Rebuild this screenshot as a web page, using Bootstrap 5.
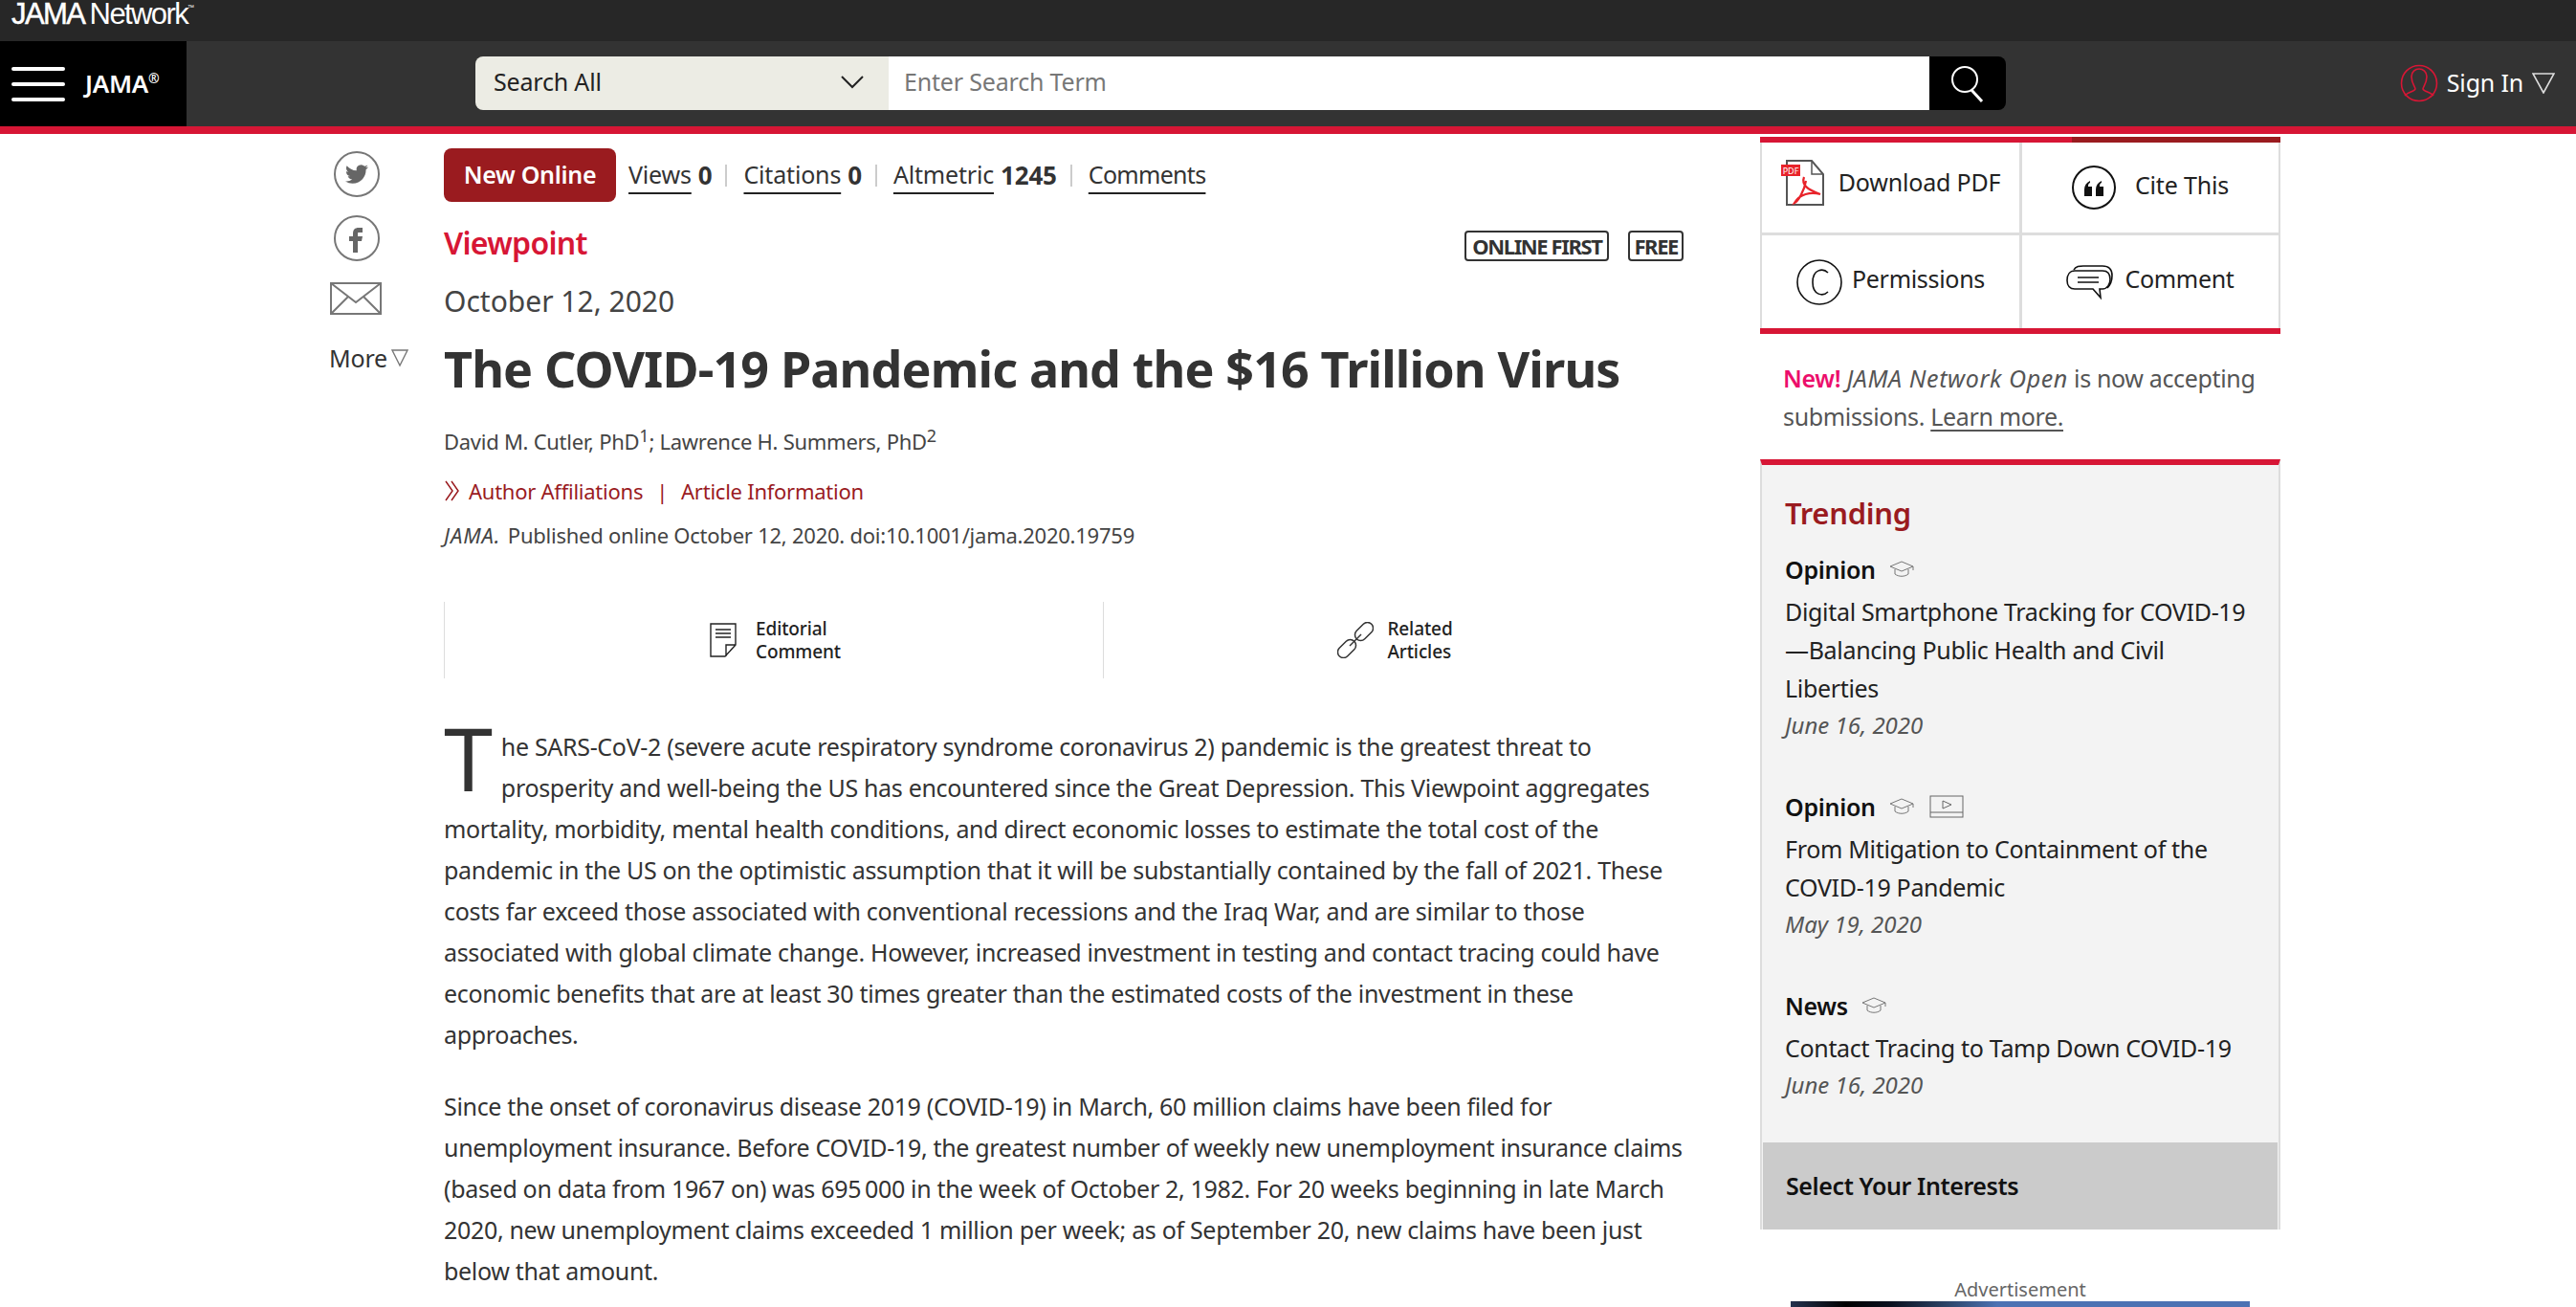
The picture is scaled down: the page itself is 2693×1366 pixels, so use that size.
<!DOCTYPE html>
<html>
<head>
    <title>The COVID-19 Pandemic and the $16 Trillion Virus</title>
    <link href="https://cdn.jsdelivr.net/npm/bootstrap@5.3.0/dist/css/bootstrap.min.css" rel="stylesheet">
    <style>
        html, body { height: 100vh; overflow: hidden; }
        body { font-family: "Noto Sans", sans-serif; color: #333; font-size: 25px; letter-spacing: -.18px; background: #fff; }
        a { color: inherit; text-decoration: none; }
        .net-bar { height: 43px; background: #272727; color: #fff; padding-left: 12px; font-size: 31px; line-height: 30px; letter-spacing: -1.6px; font-family: "Liberation Sans", sans-serif; }
        .net-bar b { font-weight: 400; -webkit-text-stroke: .5px #fff; }
        .net-bar sup { font-size: 7px; top: -15px; letter-spacing: 0; }
        .main-bar { height: 97px; background: #333; border-bottom: 8px solid #d71635; }
        .logo-box { width: 195px; height: 89px; background: #000; color: #fff; padding-left: 12px; gap: 21px; }
        .logo-txt { font-weight: 600; font-size: 26px; letter-spacing: -.3px; }
        .logo-txt sup { font-size: 14px; top: -10px; }
        .burger i { display: block; width: 56px; height: 4px; background: #fff; border-radius: 2px; margin: 12px 0; }
        .search-box { margin-left: 302px; width: 1600px; height: 56px; }
        .search-sel { width: 432px; background: #ecece4; border-radius: 8px 0 0 8px; color: #222; padding: 0 26px 2px 19px; }
        .search-in { flex: 1; background: #fff; color: #777; padding: 0 0 2px 16px; }
        .search-btn { width: 80px; background: #000; border-radius: 0 8px 8px 0; }
        .sign-in { margin-left: auto; margin-right: 22px; color: #fff; gap: 9px; font-size: 25px; height: 56px; }
        .page-wrap { padding-left: 344px; }
        .share-rail { width: 120px; padding-top: 18px; flex: none; }
        .share-rail svg { display: block; }
        .ci { margin-left: 5px; margin-bottom: 19px; }
        .env-ico { margin-top: 22px; }
        .more-lnk { color: #333; margin-top: 27px; line-height: 36px; }
        .art-col { width: 1296px; flex: none; padding-top: 15px; }
        .aside-col { width: 544px; margin-left: 80px; flex: none; padding-top: 3px; }
        .new-btn { background: #9a1b1f; color: #fff; font-weight: 600; border-radius: 8px; width: 180px; height: 56px; letter-spacing: -.3px; }
        .stat-row { height: 56px; margin-left: 13px; color: #333; }
        .stat-row u { text-decoration: underline 2px #222; text-underline-offset: 9px; }
        .stat-row u:last-child { letter-spacing: -.7px; }
        .stat-row b { font-weight: 700; font-size: 26px; margin-left: 7px; }
        .stat-sep { width: 2px; height: 23px; background: #ccc; margin: 0 17px 0 14px; }
        .kind-lnk { color: #d71635; font-size: 32px; font-weight: 600; line-height: 44px; letter-spacing: -.7px; }
        .kind-row { margin-top: 21px; }
        .tag-lbl { border: 2px solid #333; border-radius: 4px; height: 32px; font-size: 22px; font-weight: 700; color: #333; padding: 0 6px; line-height: 28px; letter-spacing: -1.4px; position: relative; top: 3px; }
        .tag-lbl + .tag-lbl { padding: 0 4px; }
        .tag-gap { gap: 20px; }
        .pub-date { font-size: 30px; color: #444; margin-top: 19px; line-height: 40px; letter-spacing: 0; }
        .art-title { font-size: 52px; font-weight: 700; color: #333; margin: 15px 0 0; line-height: 70px; letter-spacing: -.86px; }
        .au-line { font-size: 22px; color: #444; margin-top: 25px; line-height: 32px; letter-spacing: -.27px; }
        .au-line sup { font-size: 18px; top: -8px; vertical-align: baseline; position: relative; }
        .aff-line { font-size: 22px; color: #9a1b1f; margin-top: 20px; line-height: 32px; letter-spacing: -.25px; }
        .aff-sep { margin: 0 14px; }
        .cite-line { font-size: 22px; color: #444; margin-top: 14px; line-height: 32px; letter-spacing: -.24px; }
        .cite-line i { letter-spacing: .9px; margin-right: 2px; }
        .rel-box { margin-top: 54px; height: 80px; }
        .rel-cell { width: 689px; flex: none; border-left: 1px solid #ddd; gap: 20px; font-size: 19px; font-weight: 500; line-height: 24px; color: #222; letter-spacing: -.1px; padding-left: 3px; }
        .rel-cell + .rel-cell { width: 607px; gap: 14px; }
        .body-txt { margin-top: 50px; line-height: 43px; color: #333; letter-spacing: -.32px; }
        .body-txt p { margin: 0 0 32px; }
        .drop-t { float: left; font-size: 92px; line-height: 66px; height: 86px; margin: 0 9px 0 0; font-weight: 400; color: #333; }
        .tool-bar { height: 6px; background: linear-gradient(to right, #d71635 326px, #9a1b1f 326px); }
        .tool-grid { display: grid; grid-template-columns: 272px 1fr; border-left: 2px solid #ddd; border-right: 2px solid #ddd; }
        .tool-cell { height: 97px; color: #222; }
        .tool-cell span { margin-bottom: 5px; }
        .tool-cell:nth-child(odd) { border-right: 3px solid #ddd; }
        .tool-cell:nth-child(-n+2) { border-bottom: 3px solid #ddd; }
        .tool-pdf { padding-bottom: 10px; gap: 14px; }
        .tool-pdf span { margin-bottom: 0; }
        .tool-cite { gap: 20px; }
        .tool-perm { gap: 10px; letter-spacing: -.3px; }
        .tool-talk { gap: 9px; letter-spacing: -.3px; }
        .tool-end { height: 6px; background: #d71635; }
        .promo-txt { padding: 26px 24px 25px 24px; line-height: 40px; color: #555; letter-spacing: -.35px; }
        .promo-txt b { color: #ec0e6b; font-weight: 600; }
        .promo-txt i { letter-spacing: .6px; }
        .promo-txt u { text-underline-offset: 4px; }
        .trend-box { background: #f3f3f3; border-top: 6px solid #d71635; border-left: 2px solid #ddd; border-right: 2px solid #ddd; padding-top: 28px; }
        .trend-in { padding: 0 24px; }
        .trend-ttl { color: #9a1b1f; font-size: 31px; font-weight: 600; line-height: 44px; margin-bottom: 21px; letter-spacing: -.3px; }
        .trend-item { margin-bottom: 50px; }
        .trend-kind { font-weight: 600; color: #111; line-height: 32px; gap: 14px; letter-spacing: -.3px; }
        .trend-art { line-height: 40px; color: #222; margin-top: 8px; letter-spacing: -.32px; }
        .trend-date { font-style: italic; color: #555; font-size: 24px; line-height: 38px; letter-spacing: 0; }
        .interest-bar { background: #cbcbcb; height: 91px; padding-left: 24px; font-weight: 600; color: #111; margin: 41px 1px 0; letter-spacing: -.4px; }
        .ad-lbl { font-size: 20px; color: #666; text-align: center; margin-top: 51px; line-height: 24px; letter-spacing: 0; }
        .ad-pic { width: 480px; height: 30px; margin: 0 0 0 32px; background: linear-gradient(to right, #24324f, #000 12%, #0b1120 22%, #2c4468 34%, #4c72b3 45%); }
    </style>
</head>
<body>
    <div class="net-bar"><b>JAMA</b> Network<sup>™</sup></div>
    <div class="main-bar d-flex align-items-start">
        <div class="logo-box d-flex align-items-center">
            <div class="burger"><i></i><i></i><i></i></div>
            <span class="logo-txt">JAMA<sup>®</sup></span>
        </div>
        <div class="search-box d-flex mt-3">
            <div class="search-sel d-flex align-items-center justify-content-between">
                <span>Search All</span>
                <svg width="24" height="14" viewBox="0 0 24 14" fill="none" stroke="#222" stroke-width="2"><path d="M1 1l11 11L23 1"/></svg>
            </div>
            <div class="search-in d-flex align-items-center">Enter Search Term</div>
            <div class="search-btn d-flex align-items-center justify-content-center">
                <svg width="40" height="40" viewBox="0 0 40 40" fill="none" stroke="#fff" stroke-width="2"><circle cx="17" cy="16" r="13"/><path d="M24 27l11 12" stroke-width="3"/></svg>
            </div>
        </div>
        <div class="sign-in d-flex align-items-center mt-3">
            <svg width="40" height="40" viewBox="0 0 40 40" fill="none" stroke="#d71635" stroke-width="1.6"><circle cx="20" cy="20" r="18.5"/><path d="M5 33c3-4 10-4 11-7 0-2-4-6-4-13 0-5 4-8 8-8s8 3 8 8c0 7-4 11-4 13 1 3 8 3 11 7"/></svg>
            <span>Sign In</span>
            <svg width="24" height="22" viewBox="0 0 24 22" fill="none" stroke="#ddd" stroke-width="1.6"><path d="M1 1h22L12 21z"/></svg>
        </div>
    </div>

    <div class="page-wrap d-flex">
        <div class="share-rail">
            <svg class="ci" width="48" height="48" viewBox="0 0 48 48"><circle cx="24" cy="24" r="23" fill="none" stroke="#777" stroke-width="2"/><g transform="translate(12 12)"><path fill="#666" d="M23.953 4.57a10 10 0 01-2.825.775 4.958 4.958 0 002.163-2.723c-.951.555-2.005.959-3.127 1.184a4.92 4.92 0 00-8.384 4.482C7.69 8.095 4.067 6.13 1.64 3.162a4.822 4.822 0 00-.666 2.475c0 1.71.87 3.213 2.188 4.096a4.904 4.904 0 01-2.228-.616v.06a4.923 4.923 0 003.946 4.827 4.996 4.996 0 01-2.212.085 4.936 4.936 0 004.604 3.417 9.867 9.867 0 01-6.102 2.105c-.39 0-.779-.023-1.17-.067a13.995 13.995 0 007.557 2.209c9.053 0 13.998-7.496 13.998-13.985 0-.21 0-.42-.015-.63A9.935 9.935 0 0024 4.59z"/></g></svg>
            <svg class="ci" width="48" height="48" viewBox="0 0 48 48"><circle cx="24" cy="24" r="23" fill="none" stroke="#777" stroke-width="2"/><path fill="#666" d="M26 18h4v-5h-4c-4 0-6 2-6 6v3h-4v5h4v12h5V27h4l1-5h-5v-3c0-.6.4-1 1-1z"/></svg>
            <svg class="env-ico" width="56" height="34" viewBox="0 0 56 34" fill="none" stroke="#777" stroke-width="2"><rect x="2" y="1" width="52" height="32"/><path d="M2 1l26 20L54 1M2 33l18-18M54 33L36 15"/></svg>
            <div class="more-lnk d-flex align-items-center">More<svg class="ms-1" width="18" height="20" viewBox="0 0 18 20" fill="none" stroke="#777" stroke-width="1.4"><path d="M1 2h16L9 18z"/></svg></div>
        </div>

        <div class="art-col">
            <div class="d-flex">
                <a class="new-btn d-flex align-items-center justify-content-center" href="#">New Online</a>
                <div class="stat-row d-flex align-items-center">
                    <u>Views</u><b>0</b><span class="stat-sep"></span>
                    <u>Citations</u><b>0</b><span class="stat-sep"></span>
                    <u>Altmetric</u><b>1245</b><span class="stat-sep"></span>
                    <u>Comments</u>
                </div>
            </div>
            <div class="kind-row d-flex justify-content-between align-items-center">
                <a class="kind-lnk" href="#">Viewpoint</a>
                <div class="d-flex tag-gap">
                    <span class="tag-lbl">ONLINE FIRST</span>
                    <span class="tag-lbl">FREE</span>
                </div>
            </div>
            <div class="pub-date">October 12, 2020</div>
            <h1 class="art-title">The COVID-19 Pandemic and the $16 Trillion Virus</h1>
            <div class="au-line">David M. Cutler, PhD<sup>1</sup>; Lawrence H. Summers, PhD<sup>2</sup></div>
            <div class="aff-line d-flex align-items-center">
                <svg class="me-2" width="18" height="22" viewBox="0 0 18 22" fill="none" stroke="#9a1b1f" stroke-width="1.5"><path d="M2 1l7 10-7 10M8 1l7 10-7 10"/></svg>
                <a href="#">Author Affiliations</a><span class="aff-sep">|</span><a href="#">Article Information</a>
            </div>
            <div class="cite-line"><i>JAMA.</i> Published online October 12, 2020. doi:10.1001/jama.2020.19759</div>
            <div class="rel-box d-flex">
                <div class="rel-cell d-flex align-items-center justify-content-center">
                    <svg width="28" height="36" viewBox="0 0 28 36" fill="none" stroke="#222" stroke-width="1.4"><path d="M1 1h26v22L16 35H1zM27 23H17v12M6 7h16M6 11h16M6 15h16"/></svg>
                    <span>Editorial<br>Comment</span>
                </div>
                <div class="rel-cell d-flex align-items-center justify-content-center">
                    <svg width="38" height="38" viewBox="0 0 38 38" fill="none" stroke="#333" stroke-width="1.5"><rect x="-11" y="-6" width="22" height="12" rx="6" transform="translate(10 28) rotate(-45)"/><rect x="-11" y="-6" width="22" height="12" rx="6" transform="translate(28 10) rotate(-45)"/><path d="M13 25l12-12"/></svg>
                    <span>Related<br>Articles</span>
                </div>
            </div>
            <div class="body-txt">
                <p><span class="drop-t">T</span>he SARS-CoV-2 (severe acute respiratory syndrome coronavirus 2) pandemic is the greatest threat to prosperity and well-being the US has encountered since the Great Depression. This Viewpoint aggregates mortality, morbidity, mental health conditions, and direct economic losses to estimate the total cost of the pandemic in the US on the optimistic assumption that it will be substantially contained by the fall of 2021. These costs far exceed those associated with conventional recessions and the Iraq War, and are similar to those associated with global climate change. However, increased investment in testing and contact tracing could have economic benefits that are at least 30 times greater than the estimated costs of the investment in these approaches.</p>
                <p>Since the onset of coronavirus disease 2019 (COVID-19) in March, 60 million claims have been filed for unemployment insurance. Before COVID-19, the greatest number of weekly new unemployment insurance claims (based on data from 1967 on) was 695&#8239;000 in the week of October 2, 1982. For 20 weeks beginning in late March 2020, new unemployment claims exceeded 1 million per week; as of September 20, new claims have been just below that amount.</p>
            </div>
        </div>

        <div class="aside-col">
            <div class="tool-bar"></div>
            <div class="tool-grid">
                <a class="tool-cell tool-pdf d-flex align-items-center justify-content-center" href="#">
                    <svg width="46" height="48" viewBox="0 0 46 48"><path d="M6 1h26l12 14v32H6z" fill="#fff" stroke="#555" stroke-width="2"/><path d="M32 1v14h12" fill="none" stroke="#555" stroke-width="1.5"/><rect y="5" width="20" height="12" fill="#e8232a"/><text x="10" y="14.500" font-size="9" fill="#fff" text-anchor="middle" letter-spacing="0">PDF</text><path d="M24 18c-3 8 3 13 17 18-10-3-22 0-27 9 4-2 10-12 12-23" fill="none" stroke="#e8232a" stroke-width="2.2"/></svg>
                    <span>Download PDF</span>
                </a>
                <a class="tool-cell tool-cite d-flex align-items-center justify-content-center" href="#">
                    <svg width="46" height="46" viewBox="0 0 46 46"><circle cx="23" cy="23" r="22" fill="none" stroke="#111" stroke-width="2"/><path fill="#111" d="M13 32v-7c0-4 2-7 6-9v2c-2 1-2 2-2 4h4v10zM25 32v-7c0-4 2-7 6-9v2c-2 1-2 2-2 4h4v10z"/></svg>
                    <span>Cite This</span>
                </a>
                <a class="tool-cell tool-perm d-flex align-items-center justify-content-center" href="#">
                    <svg width="48" height="48" viewBox="0 0 48 48" fill="none" stroke="#111" stroke-width="1.6"><circle cx="24" cy="24" r="23"/><path d="M33 14c-5-5-16-4-16 10s11 15 16 10"/></svg>
                    <span>Permissions</span>
                </a>
                <a class="tool-cell tool-talk d-flex align-items-center justify-content-center" href="#">
                    <svg width="52" height="38" viewBox="0 0 52 38" fill="none" stroke="#111" stroke-width="1.6"><path d="M8 6c2-4 6-4 10-4h20c6 0 10 3 10 10 0 6-2 10-5 13"/><path d="M9 7h29c6 0 8 4 8 9s-3 10-8 10h-3l1 9-8-9H9c-5 0-8-3-8-9s3-10 8-10z" fill="#fff"/><path d="M12 14h22M12 19h22"/></svg>
                    <span>Comment</span>
                </a>
            </div>
            <div class="tool-end"></div>
            <div class="promo-txt"><b>New!</b> <i>JAMA Network Open</i> is now accepting submissions. <u>Learn more.</u></div>
            <div class="trend-box">
                <div class="trend-in">
                    <div class="trend-ttl">Trending</div>
                    <div class="trend-item">
                        <div class="trend-kind d-flex align-items-center">Opinion
                            <svg width="28" height="20" viewBox="0 0 28 20" fill="none" stroke="#777"><path d="M1 7l12-5 12 5-12 5zM6 10v5c4 3 10 3 14 0v-5M25 7v4"/></svg>
                        </div>
                        <div class="trend-art">Digital Smartphone Tracking for COVID-19 —Balancing Public Health and Civil Liberties</div>
                        <div class="trend-date">June 16, 2020</div>
                    </div>
                    <div class="trend-item">
                        <div class="trend-kind d-flex align-items-center">Opinion
                            <svg width="28" height="20" viewBox="0 0 28 20" fill="none" stroke="#777"><path d="M1 7l12-5 12 5-12 5zM6 10v5c4 3 10 3 14 0v-5M25 7v4"/></svg>
                            <svg width="36" height="24" viewBox="0 0 36 24" fill="none" stroke="#666"><rect x="1" y="1" width="34" height="22"/><path d="M1 18h34M14 6l9 4-9 4z"/></svg>
                        </div>
                        <div class="trend-art">From Mitigation to Containment of the COVID-19 Pandemic</div>
                        <div class="trend-date">May 19, 2020</div>
                    </div>
                    <div class="trend-item mb-0">
                        <div class="trend-kind d-flex align-items-center">News
                            <svg width="28" height="20" viewBox="0 0 28 20" fill="none" stroke="#777"><path d="M1 7l12-5 12 5-12 5zM6 10v5c4 3 10 3 14 0v-5M25 7v4"/></svg>
                        </div>
                        <div class="trend-art">Contact Tracing to Tamp Down COVID-19</div>
                        <div class="trend-date">June 16, 2020</div>
                    </div>
                </div>
                <div class="interest-bar d-flex align-items-center">Select Your Interests</div>
            </div>
            <div class="ad-lbl">Advertisement</div>
            <div class="ad-pic"></div>
        </div>
    </div>

    <script src="https://cdn.jsdelivr.net/npm/bootstrap@5.3.0/dist/js/bootstrap.bundle.min.js"></script>
</body>
</html>
